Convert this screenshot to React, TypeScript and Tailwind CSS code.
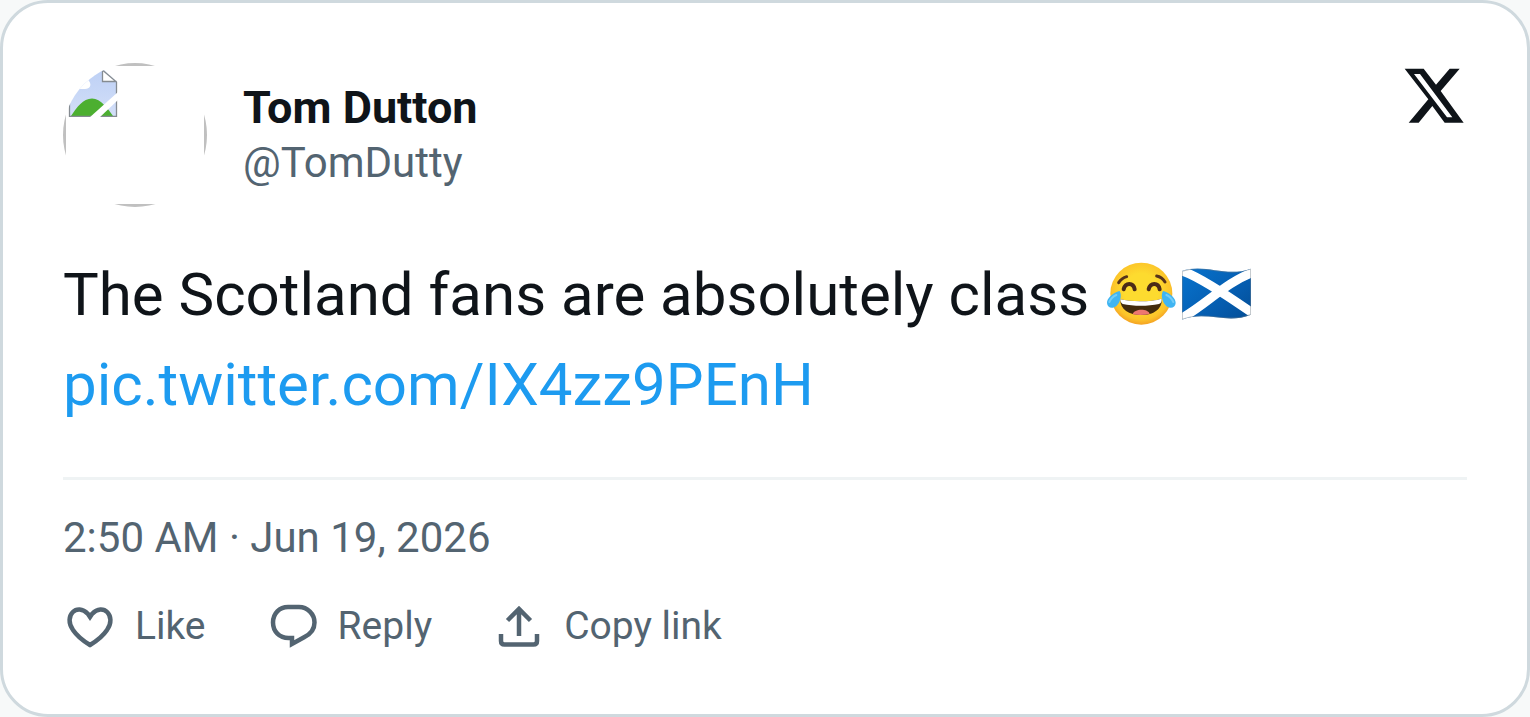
import React from 'react';

interface ActionProps {
    label: string;
    children: React.ReactNode;
}

const BrokenAvatar: React.FC = () => (
    <svg viewBox="0 0 144 144" className="size-36 shrink-0" role="img" aria-label="Tom Dutton">
        <defs>
            <clipPath id="avatar-circle">
                <circle cx="72" cy="72" r="72" />
            </clipPath>
            <linearGradient id="avatar-sky" x1="0" y1="0" x2="0" y2="1">
                <stop offset="0" stopColor="#bdd0f5" />
                <stop offset="1" stopColor="#d3dff8" />
            </linearGradient>
        </defs>
        <g clipPath="url(#avatar-circle)">
            <rect x="1.5" y="1.5" width="141" height="141" fill="none" stroke="#c0c0c0" strokeWidth="3" />
            <path d="M6 6H40L54 19V54H6Z" fill="url(#avatar-sky)" />
            <path d="M8 53C14 44 20 35.500 29 35.500C38 35.500 45 46 50 53Z" fill="#4caf30" />
            <path d="M6 26H22C27 26 29 22 26 18L22 10H6Z" fill="#fff" />
            <path d="M39.500 6V18.500H53.500Z" fill="#fff" />
            <path d="M39.500 7V18.500H53.500M40 7.500L53.500 19V54M6.500 20V53.300H54" fill="none" stroke="#858b91" strokeWidth="1.300" />
            <path d="M26 55L55 29V37L36 55Z" fill="#fff" />
        </g>
    </svg>
);

const XLogo: React.FC = () => (
    <svg viewBox="3 -3 198 198" className="size-[66px]" fill="#0f1419" aria-hidden="true">
        <path fillRule="evenodd" d="M14 14H71L108 62L149 14H179L122 81L191 176H134L97 126L56 176H26L85 106ZM42 30L141 160H157L60 30Z" />
    </svg>
);

const JoyEmoji: React.FC = () => (
    <svg viewBox="45 28 225 225" className="inline-block size-[75px] align-top" role="img" aria-label="Face with tears of joy">
        <defs>
            <radialGradient id="joy-face" cx="0.5" cy="0.45" r="0.55">
                <stop offset="0.5" stopColor="#fddb2f" />
                <stop offset="0.85" stopColor="#fcc42a" />
                <stop offset="1" stopColor="#f4a223" />
            </radialGradient>
        </defs>
        <circle cx="154" cy="132" r="93" fill="url(#joy-face)" />
        <path d="M86 99Q95 85 110 81M200 79Q216 82 225 97" fill="none" stroke="#56331b" strokeWidth="9" strokeLinecap="round" />
        <path d="M101 119C106 98 130 98 134 119M176 119C181 98 205 98 209 119" fill="none" stroke="#4b2b18" strokeWidth="12" strokeLinecap="round" />
        <path d="M91 149C123 157 185 157 215 147C218 178 190 196 154 196C117 196 90 180 91 149Z" fill="#422b0d" />
        <path d="M91 149C123 157 185 157 215 147C216 155 213 161 207 163C173 170 131 170 98 163C93 160 91 155 91 149Z" fill="#fff" />
        <path d="M128 194C132 176 175 176 179 193C163 197 143 197 128 194Z" fill="#ed7770" />
        <path d="M90 151C95 139 91 125 88 124C65 131 51 147 51 160C52 180 81 181 90 151Z" fill="#40b5f2" />
        <path d="M218 151C213 139 217 125 220 124C243 131 257 147 257 160C256 180 227 181 218 151Z" fill="#40b5f2" />
        <path d="M58 157Q65 142 79 136M250 157Q243 142 229 136" fill="none" stroke="#72cdf8" strokeWidth="6" strokeLinecap="round" />
    </svg>
);

const ScotlandFlag: React.FC = () => (
    <svg viewBox="270 28 225 225" className="inline-block size-[75px] align-top" role="img" aria-label="Flag of Scotland">
        <defs>
            <linearGradient id="flag-blue" x1="0" y1="0" x2="1" y2="1">
                <stop offset="0" stopColor="#0875d0" />
                <stop offset="0.65" stopColor="#055bad" />
                <stop offset="1" stopColor="#034b91" />
            </linearGradient>
            <clipPath id="flag-shape">
                <path d="M276 64C345 39 406 85 483 57V195C411 225 349 182 276 210Z" />
            </clipPath>
        </defs>
        <g clipPath="url(#flag-shape)">
            <path d="M276 40H483V225H276Z" fill="url(#flag-blue)" />
            <path d="M270 62C320 75 430 150 490 192M270 208C340 172 410 95 490 68" fill="none" stroke="#fff" strokeWidth="27" />
            <path d="M276 64C345 39 406 85 483 57V195C411 225 349 182 276 210Z" fill="none" stroke="#75828b" strokeOpacity="0.5" strokeWidth="5" />
        </g>
    </svg>
);

const Action: React.FC<ActionProps> = ({ label, children }) => (
    <button type="button" className="flex items-center gap-[18px]">
        <svg viewBox="0 0 54 54" className="size-[54px]" fill="none" stroke="currentColor" strokeWidth="4.5" aria-hidden="true">
            {children}
        </svg>
        {label}
    </button>
);

export default function App() {
    return (
        <main className="min-h-screen bg-[#f7f9f9] font-['Roboto',sans-serif]">
            <article className="min-h-screen rounded-[48px] border-3 border-[#cfd9de] bg-white p-[60px] text-[#0f1419]">
                {/* Author */}
                <header className="flex items-start justify-between">
                    <div className="flex items-center gap-9">
                        <BrokenAvatar />
                        <div>
                            <div className="text-[45px] leading-[56px] font-bold">Tom Dutton</div>
                            <div className="text-[42px] leading-[54px] text-[#536471]">@TomDutty</div>
                        </div>
                    </div>
                    <XLogo />
                </header>

                {/* Message */}
                <p className="mt-[43px] text-[60px] leading-[90px]">
                    The Scotland fans are absolutely class <span className="inline-flex pt-[9px] pl-px align-top"><JoyEmoji /><ScotlandFlag /></span>
                    <br />
                    <a href="#media" className="text-[#1d9bf0]">pic.twitter.com/IX4zz9PEnH</a>
                </p>

                {/* Date and actions */}
                <footer className="mt-[47px] border-t-3 border-[#eff3f4] pt-[30px] text-[#536471]">
                    <time dateTime="2026-06-19T02:50" className="block text-[42px] leading-[56px]">2:50 AM · Jun 19, 2026</time>
                    <div className="mt-8 flex flex-wrap gap-[60px] text-[39px] leading-[56px]">
                        <Action label="Like">
                            <path d="M27 46C22 43 14 37 10 31C0 17 14 3 25 15L27 18L29 15C40 3 54 17 44 31C40 37 32 43 27 46Z" />
                        </Action>
                        <Action label="Reply">
                            <path d="M22 8H33C41.500 8 48.500 15 48.500 23.500C48.500 30 44.500 35 38.500 38L26 45V39H22.500C13.500 39 7 32.500 7 23.500C7 14.500 13.500 8 22 8Z" />
                        </Action>
                        <Action label="Copy link">
                            <path d="M27 37V10M15.500 21.500L27 10L38.500 21.500M9 35V42Q9 45.500 12.500 45.500H41.500Q45 45.500 45 42V35" />
                        </Action>
                    </div>
                </footer>
            </article>
        </main>
    );
}
